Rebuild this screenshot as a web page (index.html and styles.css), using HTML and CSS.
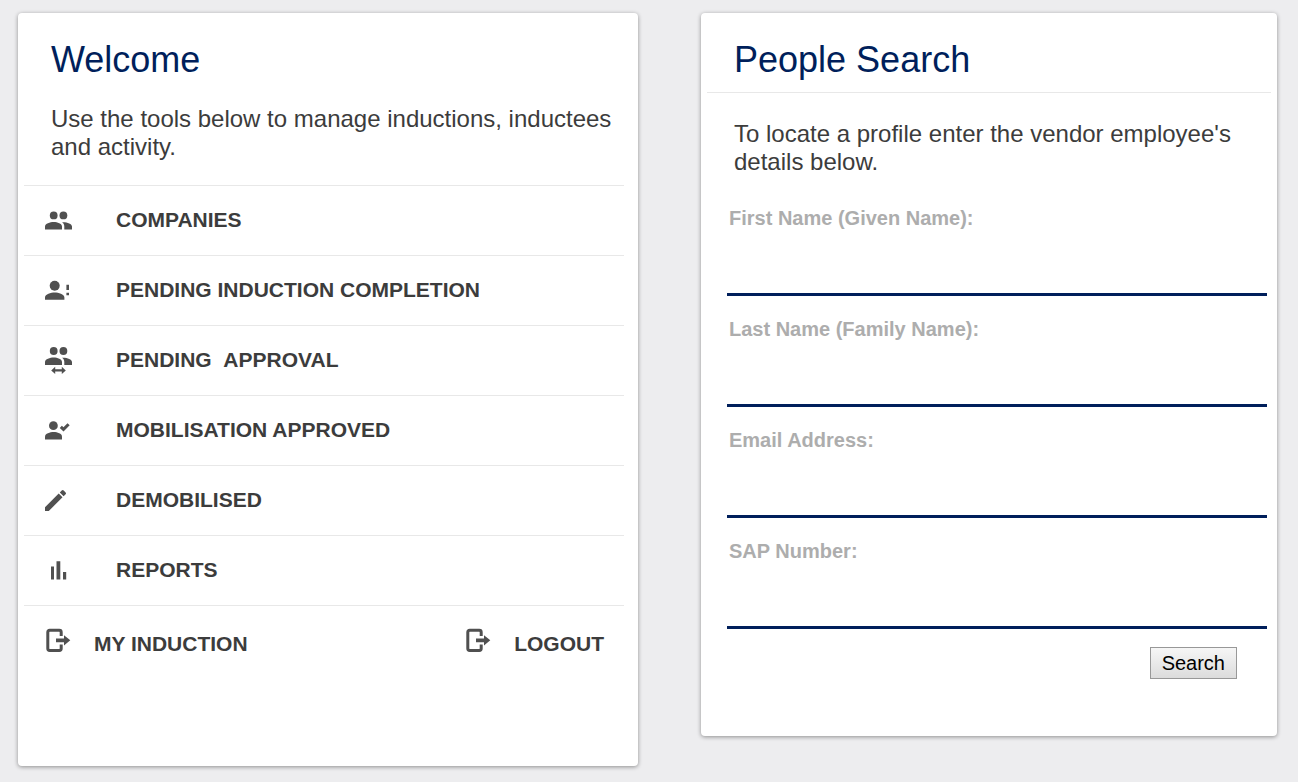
FILE: index.html
```
<!DOCTYPE html>
<html lang="en">
<head>
<meta charset="utf-8">
<meta name="viewport" content="width=device-width, initial-scale=1">
<title>Inductions</title>
<link rel="stylesheet" href="styles.css">
</head>
<body>
<main class="page">
  <section class="card welcome">
    <h1 class="card-title">Welcome</h1>
    <p class="intro">Use the tools below to manage inductions, inductees and activity.</p>
    <nav class="menu">
      <a class="menu-item" href="#companies">
        <svg class="icon" viewBox="0 0 30 30" aria-hidden="true"><circle cx="9.7" cy="9.4" r="3.9"/><circle cx="19.4" cy="9.4" r="3.9"/><path d="M1 23.5V20.5C1 17.6 6 16 9.7 16S18 17.6 18 20.5V23.5ZM18 16.2C22.5 15.8 28 17.6 28 20.5V23.5H20.3V20.5C20.3 18.6 19.5 17.2 18 16.2Z"/></svg>
        <span>COMPANIES</span>
      </a>
      <a class="menu-item" href="#pending-completion">
        <svg class="icon" viewBox="0 0 30 30" aria-hidden="true"><circle cx="10.7" cy="9.7" r="5"/><path d="M1 23.7V21.5C1 18.2 7 16.5 10.7 16.5S20.4 18.2 20.4 21.5V23.7ZM22.4 8.7H25V14H22.4ZM22.4 16.7H25V19.3H22.4Z"/></svg>
        <span>PENDING INDUCTION COMPLETION</span>
      </a>
      <a class="menu-item" href="#pending-approval">
        <svg class="icon" viewBox="0 0 30 30" aria-hidden="true"><circle cx="9.7" cy="5" r="3.9"/><circle cx="19.4" cy="5" r="3.9"/><path d="M1 19V16.1C1 13.2 6 11.6 9.7 11.6S18 13.2 18 16.1V19ZM18 11.8C22.5 11.4 28 13.2 28 16.1V19H20.3V16.1C20.3 14.2 19.5 12.8 18 11.8ZM7.2 24.4L11.2 20.8V23.3H17.8V20.8L21.8 24.4L17.8 28V25.5H11.2V28Z"/></svg>
        <span>PENDING &nbsp;APPROVAL</span>
      </a>
      <a class="menu-item" href="#mobilisation">
        <svg class="icon" viewBox="0 0 30 30" aria-hidden="true"><circle cx="9.4" cy="9.7" r="4.4"/><path d="M1 23.5V20.5C1 17.6 6 16 9.7 16S18 17.6 18 20.5V23.5Z"/><path class="stroke" d="M16.8 10.8L19.5 13.4L24.6 8.3"/></svg>
        <span>MOBILISATION APPROVED</span>
      </a>
      <a class="menu-item" href="#demobilised">
        <svg class="icon" viewBox="0 0 30 30" aria-hidden="true"><path d="M1 21.2L14.7 7.5L18.5 11.3L4.8 25H1ZM15.8 6.4L17.7 4.5Q18.7 3.5 19.7 4.5L21.6 6.4Q22.5 7.3 21.6 8.3L19.6 10.2Z"/></svg>
        <span>DEMOBILISED</span>
      </a>
      <a class="menu-item" href="#reports">
        <svg class="icon" viewBox="0 0 30 30" aria-hidden="true"><path d="M7 10.5H10V23.5H7ZM12.5 5.3H16.3V23.5H12.5ZM19 16H22.2V23.5H19Z"/></svg>
        <span>REPORTS</span>
      </a>
    </nav>
    <div class="account">
      <a class="account-link" href="#my-induction">
        <svg class="icon" viewBox="0 0 30 30" aria-hidden="true"><path class="stroke" d="M17.2 10V6.2Q17.2 4.3 15.3 4.3H5.7Q3.8 4.3 3.8 6.2V22.6Q3.8 24.5 5.7 24.5H15.3Q17.2 24.5 17.2 22.6V18.5"/><path d="M12 12.4H20V9.2L26.3 14.3L20 19.4V16.2H12Z"/></svg>
        <span>MY INDUCTION</span>
      </a>
      <a class="account-link" href="#logout">
        <svg class="icon" viewBox="0 0 30 30" aria-hidden="true"><path class="stroke" d="M17.2 10V6.2Q17.2 4.3 15.3 4.3H5.7Q3.8 4.3 3.8 6.2V22.6Q3.8 24.5 5.7 24.5H15.3Q17.2 24.5 17.2 22.6V18.5"/><path d="M12 12.4H20V9.2L26.3 14.3L20 19.4V16.2H12Z"/></svg>
        <span>LOGOUT</span>
      </a>
    </div>
  </section>

  <section class="card search">
    <h2 class="card-title">People Search</h2>
    <hr class="rule">
    <p class="intro">To locate a profile enter the vendor employee's details below.</p>
    <form class="form">
      <div class="field">
        <label for="first-name">First Name (Given Name):</label>
        <input id="first-name" type="text">
      </div>
      <div class="field">
        <label for="last-name">Last Name (Family Name):</label>
        <input id="last-name" type="text">
      </div>
      <div class="field">
        <label for="email">Email Address:</label>
        <input id="email" type="text">
      </div>
      <div class="field">
        <label for="sap">SAP Number:</label>
        <input id="sap" type="text">
      </div>
      <button class="submit" type="button">Search</button>
    </form>
  </section>
</main>
</body>
</html>
```
FILE: styles.css
```
* {
  box-sizing: border-box;
}

body {
  margin: 0;
  background: #ededef;
  color: #3c3c3c;
  font-family: "Liberation Sans", Arial, sans-serif;
}

.page {
  display: grid;
  grid-template-columns: 620fr 576fr;
  align-items: start;
  gap: 63px;
  padding: 13px 21px 15px 18px;
}

.card {
  background: #fff;
  border-radius: 4px;
  box-shadow: 0 1px 4px rgba(0, 0, 0, 0.4);
}

.welcome {
  padding: 27px 14px 110px 6px;
}

.search {
  padding: 27px 6px 57px;
}

.card-title {
  margin: 0;
  padding-left: 27px;
  color: #001f5b;
  font-size: 36px;
  font-weight: 400;
  line-height: 40px;
}

.intro {
  margin: 0;
  padding: 25px 0 24px 27px;
  font-size: 24px;
  line-height: 28px;
}

.rule {
  margin: 12px 0 0;
  border: 0;
  border-top: 1px solid #e8e8e8;
}

.search .intro {
  padding-top: 27px;
  padding-bottom: 27px;
}

.menu {
  border-bottom: 1px solid #e8e8e8;
}

.menu-item {
  display: flex;
  align-items: center;
  gap: 42px;
  height: 70px;
  padding-left: 20px;
  border-top: 1px solid #e8e8e8;
}

.menu-item span {
  padding-bottom: 2px;
}

.menu-item,
.account-link {
  color: #3c3c3c;
  font-size: 21px;
  font-weight: 700;
  line-height: 24px;
  text-decoration: none;
}

.icon {
  flex: none;
  width: 30px;
  height: 30px;
  fill: #505050;
}

.icon .stroke {
  fill: none;
  stroke: #505050;
  stroke-width: 3px;
}

.account {
  display: flex;
  justify-content: space-between;
  padding: 20px 20px 0;
}

.account-link {
  display: flex;
  align-items: flex-end;
  gap: 20px;
}

.form {
  display: flex;
  flex-direction: column;
  gap: 18px;
  padding: 0 4px 0 20px;
}

.field label {
  display: block;
  padding: 3px 0 0 2px;
  color: #adadad;
  font-size: 20px;
  font-weight: 700;
  line-height: 24px;
}

.field input {
  display: block;
  width: 100%;
  height: 66px;
  padding: 20px 2px 0;
  border: 0;
  border-bottom: 3px solid #001f5b;
  background: transparent;
  color: #3c3c3c;
  font: inherit;
  font-size: 20px;
}

.submit {
  align-self: flex-end;
  height: 32px;
  margin-right: 30px;
  padding: 0 11px;
  border: 1px solid #989898;
  border-radius: 0;
  background: linear-gradient(#f6f6f6, #dcdcdc);
  color: #000;
  font: inherit;
  font-size: 20px;
  line-height: 28px;
}
```
